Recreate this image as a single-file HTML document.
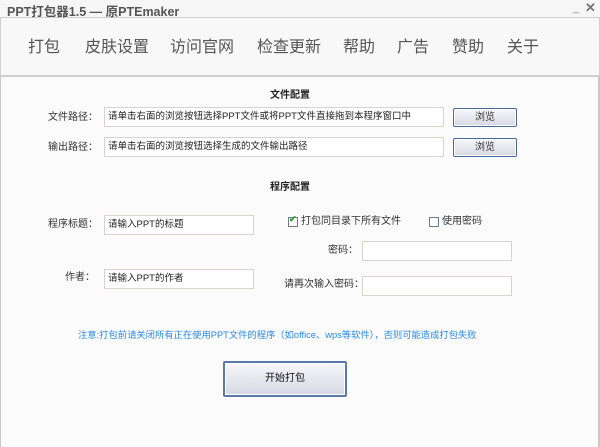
<!DOCTYPE html>
<html><head><meta charset="utf-8"><style>
*{margin:0;padding:0;box-sizing:border-box}
body{width:600px;height:447px;background:#fbfbfc;position:relative;overflow:hidden;font-family:"Liberation Sans","Noto Sans CJK SC","WenQuanYi Zen Hei",sans-serif;color:#222}
.a{position:absolute;white-space:nowrap}
#title{left:0;top:0;width:600px;height:18px;background:#f6f6f6;border-bottom:1px solid #cfcfcf}
#nav{left:0;top:18px;width:600px;height:59px;background:#f8f8f8;border:1px solid #d0d0d0;border-top:none;border-bottom:2px solid #cfcfcf}
#content{left:0;top:77px;width:600px;height:370px;border-left:1px solid #c8c8c8;border-right:2px solid #c8c8c8}
.n{font-size:16px;color:#555;top:36px;line-height:24px}
.l{font-size:10px;color:#333;line-height:14px}
.in{background:#fff;border:1px solid #d8d4c8;font-size:9.5px;color:#222;padding-left:3px;overflow:hidden}
.btn{border:1px solid #4a6a9a;border-radius:2px;background:linear-gradient(#f6f6fa,#d8d8e4);font-size:10px;text-align:center;color:#333;box-shadow:inset 0 0 0 1px #fff}
.cb{width:10px;height:10px;border:1px solid #6a7a90;background:#fff}
</style></head><body>
<div class="a" id="title"></div>
<div class="a" style="left:7px;top:1px;font-size:12.5px;font-weight:bold;color:#555">PPT打包器1.5 — 原PTEmaker</div>
<div class="a" style="left:573px;top:2px;font-size:11px;color:#888">_</div>
<div class="a" style="left:585px;top:0px;font-size:13px;color:#777;font-weight:bold">✕</div>
<div class="a" id="nav"></div>
<div class="a n" style="left:28px">打包</div>
<div class="a n" style="left:85px">皮肤设置</div>
<div class="a n" style="left:170px">访问官网</div>
<div class="a n" style="left:257px">检查更新</div>
<div class="a n" style="left:343px">帮助</div>
<div class="a n" style="left:397px">广告</div>
<div class="a n" style="left:452px">赞助</div>
<div class="a n" style="left:507px">关于</div>
<div class="a" id="content"></div>
<div class="a l" style="left:270px;top:89px;font-weight:bold;color:#222">文件配置</div>
<div class="a l" style="left:48px;top:111px">文件路径：</div>
<div class="a in" style="left:104px;top:107px;width:340px;height:20px;line-height:18px">请单击右面的浏览按钮选择PPT文件或将PPT文件直接拖到本程序窗口中</div>
<div class="a btn" style="left:453px;top:108px;width:64px;height:19px;line-height:17px">浏览</div>
<div class="a l" style="left:48px;top:141px">输出路径：</div>
<div class="a in" style="left:104px;top:137px;width:340px;height:20px;line-height:18px">请单击右面的浏览按钮选择生成的文件输出路径</div>
<div class="a btn" style="left:453px;top:138px;width:64px;height:19px;line-height:17px">浏览</div>
<div class="a l" style="left:270px;top:181px;font-weight:bold;color:#222">程序配置</div>
<div class="a l" style="left:48px;top:218px">程序标题：</div>
<div class="a in" style="left:104px;top:215px;width:150px;height:20px;line-height:18px">请输入PPT的标题</div>
<div class="a cb" style="left:288px;top:217px"></div>
<div class="a" style="left:289px;top:214px;font-size:9px;color:#2a9a2a;font-weight:bold">✔</div>
<div class="a l" style="left:301px;top:215px">打包同目录下所有文件</div>
<div class="a cb" style="left:429px;top:217px"></div>
<div class="a l" style="left:442px;top:215px">使用密码</div>
<div class="a l" style="left:328px;top:244px">密码：</div>
<div class="a in" style="left:362px;top:241px;width:150px;height:20px"></div>
<div class="a l" style="left:65px;top:271px">作者：</div>
<div class="a in" style="left:104px;top:269px;width:150px;height:20px;line-height:18px">请输入PPT的作者</div>
<div class="a l" style="left:284px;top:278px">请再次输入密码：</div>
<div class="a in" style="left:362px;top:276px;width:150px;height:20px"></div>
<div class="a" style="left:78px;top:327px;font-size:9.3px;color:#2a8ae6">注意:打包前请关闭所有正在使用PPT文件的程序（如office、wps等软件），否则可能造成打包失败</div>
<div class="a btn" style="left:223px;top:361px;width:124px;height:36px;line-height:32px;border-width:2px;border-color:#5a78a8;color:#111">开始打包</div>
</body></html>
